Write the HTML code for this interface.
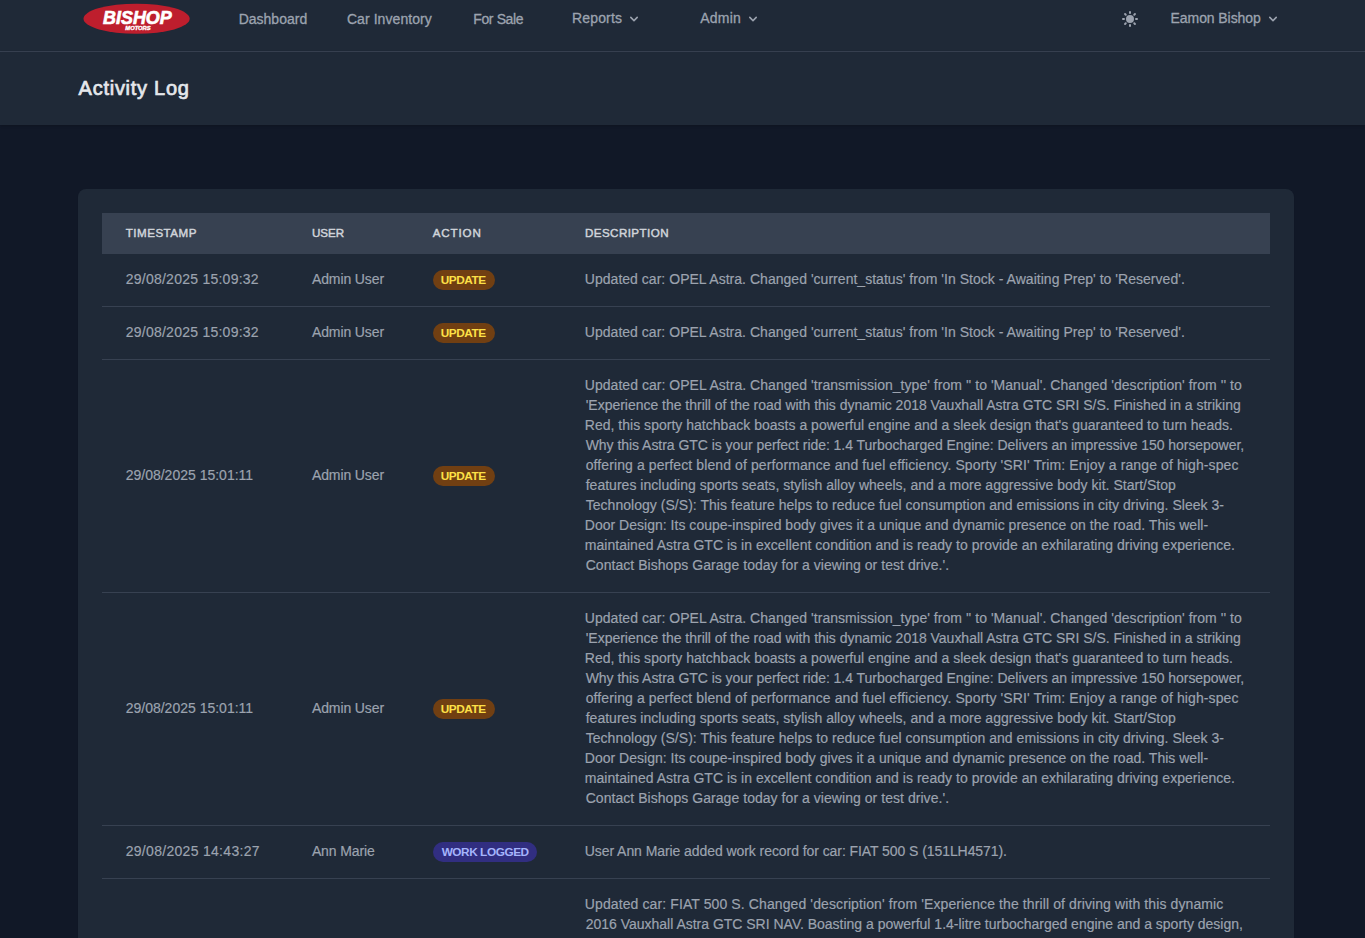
<!DOCTYPE html>
<html lang="en">
<head>
<meta charset="utf-8">
<title>Activity Log</title>
<style>
*{box-sizing:border-box;margin:0;padding:0}
html,body{width:1365px;height:938px;overflow:hidden}
body{background:#111827;font-family:"Liberation Sans",sans-serif;color:#9ca3af;position:relative}
nav{position:absolute;left:0;top:0;width:1365px;height:52px;background:#1f2937;border-bottom:1px solid #374151}
header{position:absolute;left:0;top:52px;width:1365px;height:73px;background:#1f2937;box-shadow:0 1px 3px 0 rgba(0,0,0,.1),0 1px 2px -1px rgba(0,0,0,.1)}
.card{position:absolute;left:78px;top:189px;width:1216px;height:800px;background:#1f2937;border-radius:8px;box-shadow:0 1px 2px rgba(0,0,0,.05)}
.thead{position:absolute;left:102px;top:213px;width:1168px;height:40.5px;background:#374151}
.hr{position:absolute;left:102px;width:1168px;height:1px;background:#374151}
.chev{position:absolute;top:10.7px;width:16px;height:16px}
.t{position:absolute;white-space:nowrap}
.nl{font-size:14px;line-height:18px;color:#9ca3af;-webkit-text-stroke:0.3px #9ca3af}
h2.h2{font-size:20px;line-height:28px;font-weight:400;color:#e5e7eb;-webkit-text-stroke:0.7px #e5e7eb}
.th{font-size:11.6px;line-height:16px;font-weight:400;color:#d1d5db;-webkit-text-stroke:0.45px #d1d5db}
.c{font-size:14px;line-height:20px;color:#9ca3af;-webkit-text-stroke:0.18px #9ca3af}
.bt{font-size:11.8px;line-height:20px;font-weight:700}
.badge{position:absolute;height:20px;border-radius:10px}
.badge.upd{background:#713f12}
.badge.wl{background:#312e81}
.bt.upd{color:#fde047}
.bt.wl{color:#a5b4fc}
</style>
</head>
<body>
<nav>
  <svg style="position:absolute;left:83px;top:3px" width="108" height="32" viewBox="0 0 108 32">
    <ellipse cx="53.6" cy="15.75" rx="53.1" ry="15.05" fill="#be1e2d"/>
    <text x="20.1" y="21.2" textLength="68.6" lengthAdjust="spacingAndGlyphs" font-family="Liberation Sans, sans-serif" font-weight="700" font-style="italic" font-size="19" fill="#fff" stroke="#fff" stroke-width="0.7">BISHOP</text>
    <text x="42.3" y="26.9" textLength="25.4" lengthAdjust="spacingAndGlyphs" font-family="Liberation Sans, sans-serif" font-weight="700" font-style="italic" font-size="5.7" fill="#fff" stroke="#fff" stroke-width="0.35">MOTORS</text>
  </svg>
  <svg class="chev" style="left:626px" viewBox="0 0 20 20" fill="#9ca3af"><path fill-rule="evenodd" clip-rule="evenodd" d="M5.293 7.293a1 1 0 011.414 0L10 10.586l3.293-3.293a1 1 0 111.414 1.414l-4 4a1 1 0 01-1.414 0l-4-4a1 1 0 010-1.414z"/></svg>
  <svg class="chev" style="left:745px" viewBox="0 0 20 20" fill="#9ca3af"><path fill-rule="evenodd" clip-rule="evenodd" d="M5.293 7.293a1 1 0 011.414 0L10 10.586l3.293-3.293a1 1 0 111.414 1.414l-4 4a1 1 0 01-1.414 0l-4-4a1 1 0 010-1.414z"/></svg>
  <svg style="position:absolute;left:1120px;top:9px" width="20" height="20" viewBox="0 0 20 20" fill="#9ca3af"><path fill-rule="evenodd" clip-rule="evenodd" d="M10 2a1 1 0 011 1v1a1 1 0 11-2 0V3a1 1 0 011-1zm4 8a4 4 0 11-8 0 4 4 0 018 0zm-.464 4.95l.707.707a1 1 0 001.414-1.414l-.707-.707a1 1 0 00-1.414 1.414zm2.12-10.607a1 1 0 010 1.414l-.706.707a1 1 0 11-1.414-1.414l.707-.707a1 1 0 011.414 0zM17 11a1 1 0 100-2h-1a1 1 0 100 2h1zm-7 4a1 1 0 011 1v1a1 1 0 11-2 0v-1a1 1 0 011-1zM5.05 6.464A1 1 0 106.465 5.05l-.708-.707a1 1 0 00-1.414 1.414l.707.707zm1.414 8.486l-.707.707a1 1 0 01-1.414-1.414l.707-.707a1 1 0 011.414 1.414zM4 11a1 1 0 100-2H3a1 1 0 000 2h1z"/></svg>
  <svg class="chev" style="left:1265px" viewBox="0 0 20 20" fill="#9ca3af"><path fill-rule="evenodd" clip-rule="evenodd" d="M5.293 7.293a1 1 0 011.414 0L10 10.586l3.293-3.293a1 1 0 111.414 1.414l-4 4a1 1 0 01-1.414 0l-4-4a1 1 0 010-1.414z"/></svg>
<a id="n1" class="t nl" style="left:238.70px;top:10.0px;letter-spacing:0.000px">Dashboard</a>
<a id="n2" class="t nl" style="left:346.90px;top:10.0px;letter-spacing:0.075px">Car Inventory</a>
<a id="n3" class="t nl" style="left:473.30px;top:10.0px;letter-spacing:-0.386px">For Sale</a>
<a id="n4" class="t nl" style="left:572.00px;top:9.0px;letter-spacing:0.150px">Reports</a>
<a id="n5" class="t nl" style="left:700.20px;top:9.0px;letter-spacing:0.225px">Admin</a>
<a id="n6" class="t nl" style="left:1170.60px;top:9.0px;letter-spacing:-0.082px">Eamon Bishop</a>
</nav>

<header>
<h2 id="h" class="t h2" style="left:78.60px;top:22.0px;letter-spacing:0.736px">Activity Log</h2>
</header>
<main>
<div class="card"></div>
<div class="thead"></div>
<div class="hr" style="top:306px"></div>
<div class="hr" style="top:359px"></div>
<div class="hr" style="top:592px"></div>
<div class="hr" style="top:825px"></div>
<div class="hr" style="top:878px"></div>
<span id="th1" class="t th" style="left:125.82px;top:225.0px;letter-spacing:0.473px">TIMESTAMP</span>
<span id="th2" class="t th" style="left:311.90px;top:225.0px;letter-spacing:-0.000px">USER</span>
<span id="th3" class="t th" style="left:432.68px;top:225.0px;letter-spacing:0.864px">ACTION</span>
<span id="th4" class="t th" style="left:584.98px;top:225.0px;letter-spacing:0.432px">DESCRIPTION</span>
<span id="r1ts" class="t c" style="left:125.70px;top:269.0px;letter-spacing:0.250px">29/08/2025 15:09:32</span>
<span id="r1u" class="t c" style="left:311.90px;top:269.0px;letter-spacing:-0.100px">Admin User</span>
<span class="badge upd" style="left:433px;top:270.0px;width:62px"></span>
<span id="r1b" class="t bt upd" style="left:440.76px;top:270.0px;letter-spacing:-0.468px">UPDATE</span>
<span id="r1d0" class="t c" style="left:584.80px;top:269.0px;letter-spacing:0.028px">Updated car: OPEL Astra. Changed 'current_status' from 'In Stock - Awaiting Prep' to 'Reserved'.</span>
<span id="r2ts" class="t c" style="left:125.70px;top:322.0px;letter-spacing:0.250px">29/08/2025 15:09:32</span>
<span id="r2u" class="t c" style="left:311.90px;top:322.0px;letter-spacing:-0.100px">Admin User</span>
<span class="badge upd" style="left:433px;top:323.0px;width:62px"></span>
<span id="r2b" class="t bt upd" style="left:440.76px;top:323.0px;letter-spacing:-0.468px">UPDATE</span>
<span id="r2d0" class="t c" style="left:584.80px;top:322.0px;letter-spacing:0.028px">Updated car: OPEL Astra. Changed 'current_status' from 'In Stock - Awaiting Prep' to 'Reserved'.</span>
<span id="r3ts" class="t c" style="left:125.70px;top:465.0px;letter-spacing:-0.000px">29/08/2025 15:01:11</span>
<span id="r3u" class="t c" style="left:311.90px;top:465.0px;letter-spacing:-0.100px">Admin User</span>
<span class="badge upd" style="left:433px;top:466.0px;width:62px"></span>
<span id="r3b" class="t bt upd" style="left:440.76px;top:466.0px;letter-spacing:-0.468px">UPDATE</span>
<span id="r3d0" class="t c" style="left:584.80px;top:375.0px;letter-spacing:0.034px">Updated car: OPEL Astra. Changed 'transmission_type' from '' to 'Manual'. Changed 'description' from '' to</span>
<span id="r3d1" class="t c" style="left:585.70px;top:395.0px;letter-spacing:-0.017px">'Experience the thrill of the road with this dynamic 2018 Vauxhall Astra GTC SRI S/S. Finished in a striking</span>
<span id="r3d2" class="t c" style="left:584.80px;top:415.0px;letter-spacing:0.018px">Red, this sporty hatchback boasts a powerful engine and a sleek design that's guaranteed to turn heads.</span>
<span id="r3d3" class="t c" style="left:585.70px;top:435.0px;letter-spacing:-0.044px">Why this Astra GTC is your perfect ride: 1.4 Turbocharged Engine: Delivers an impressive 150 horsepower,</span>
<span id="r3d4" class="t c" style="left:585.70px;top:455.0px;letter-spacing:0.103px">offering a perfect blend of performance and fuel efficiency. Sporty 'SRI' Trim: Enjoy a range of high-spec</span>
<span id="r3d5" class="t c" style="left:585.70px;top:475.0px;letter-spacing:0.019px">features including sports seats, stylish alloy wheels, and a more aggressive body kit. Start/Stop</span>
<span id="r3d6" class="t c" style="left:585.70px;top:495.0px;letter-spacing:0.035px">Technology (S/S): This feature helps to reduce fuel consumption and emissions in city driving. Sleek 3-</span>
<span id="r3d7" class="t c" style="left:584.80px;top:515.0px;letter-spacing:0.018px">Door Design: Its coupe-inspired body gives it a unique and dynamic presence on the road. This well-</span>
<span id="r3d8" class="t c" style="left:584.80px;top:535.0px;letter-spacing:0.026px">maintained Astra GTC is in excellent condition and is ready to provide an exhilarating driving experience.</span>
<span id="r3d9" class="t c" style="left:585.70px;top:555.0px;letter-spacing:0.047px">Contact Bishops Garage today for a viewing or test drive.'.</span>
<span id="r4ts" class="t c" style="left:125.70px;top:698.0px;letter-spacing:-0.000px">29/08/2025 15:01:11</span>
<span id="r4u" class="t c" style="left:311.90px;top:698.0px;letter-spacing:-0.100px">Admin User</span>
<span class="badge upd" style="left:433px;top:699.0px;width:62px"></span>
<span id="r4b" class="t bt upd" style="left:440.76px;top:699.0px;letter-spacing:-0.468px">UPDATE</span>
<span id="r4d0" class="t c" style="left:584.80px;top:608.0px;letter-spacing:0.034px">Updated car: OPEL Astra. Changed 'transmission_type' from '' to 'Manual'. Changed 'description' from '' to</span>
<span id="r4d1" class="t c" style="left:585.70px;top:628.0px;letter-spacing:-0.017px">'Experience the thrill of the road with this dynamic 2018 Vauxhall Astra GTC SRI S/S. Finished in a striking</span>
<span id="r4d2" class="t c" style="left:584.80px;top:648.0px;letter-spacing:0.018px">Red, this sporty hatchback boasts a powerful engine and a sleek design that's guaranteed to turn heads.</span>
<span id="r4d3" class="t c" style="left:585.70px;top:668.0px;letter-spacing:-0.044px">Why this Astra GTC is your perfect ride: 1.4 Turbocharged Engine: Delivers an impressive 150 horsepower,</span>
<span id="r4d4" class="t c" style="left:585.70px;top:688.0px;letter-spacing:0.103px">offering a perfect blend of performance and fuel efficiency. Sporty 'SRI' Trim: Enjoy a range of high-spec</span>
<span id="r4d5" class="t c" style="left:585.70px;top:708.0px;letter-spacing:0.019px">features including sports seats, stylish alloy wheels, and a more aggressive body kit. Start/Stop</span>
<span id="r4d6" class="t c" style="left:585.70px;top:728.0px;letter-spacing:0.035px">Technology (S/S): This feature helps to reduce fuel consumption and emissions in city driving. Sleek 3-</span>
<span id="r4d7" class="t c" style="left:584.80px;top:748.0px;letter-spacing:0.018px">Door Design: Its coupe-inspired body gives it a unique and dynamic presence on the road. This well-</span>
<span id="r4d8" class="t c" style="left:584.80px;top:768.0px;letter-spacing:0.026px">maintained Astra GTC is in excellent condition and is ready to provide an exhilarating driving experience.</span>
<span id="r4d9" class="t c" style="left:585.70px;top:788.0px;letter-spacing:0.047px">Contact Bishops Garage today for a viewing or test drive.'.</span>
<span id="r5ts" class="t c" style="left:125.70px;top:841.0px;letter-spacing:0.300px">29/08/2025 14:43:27</span>
<span id="r5u" class="t c" style="left:311.90px;top:841.0px;letter-spacing:-0.113px">Ann Marie</span>
<span class="badge wl" style="left:433px;top:842.0px;width:104px"></span>
<span id="r5b" class="t bt wl" style="left:441.66px;top:842.0px;letter-spacing:-0.432px">WORK LOGGED</span>
<span id="r5d0" class="t c" style="left:584.80px;top:841.0px;letter-spacing:-0.070px">User Ann Marie added work record for car: FIAT 500 S (151LH4571).</span>
<span id="r6d0" class="t c" style="left:584.80px;top:894.0px;letter-spacing:0.106px">Updated car: FIAT 500 S. Changed 'description' from 'Experience the thrill of driving with this dynamic</span>
<span id="r6d1" class="t c" style="left:585.70px;top:914.0px;letter-spacing:-0.009px">2016 Vauxhall Astra GTC SRI NAV. Boasting a powerful 1.4-litre turbocharged engine and a sporty design,</span>
<span id="r6d2" class="t c" style="left:584.80px;top:934.0px;letter-spacing:0.000px">this coupe offers an exhilarating ride every time you get behind the wheel. This well-maintained vehicle</span>
</main>
</body>
</html>
